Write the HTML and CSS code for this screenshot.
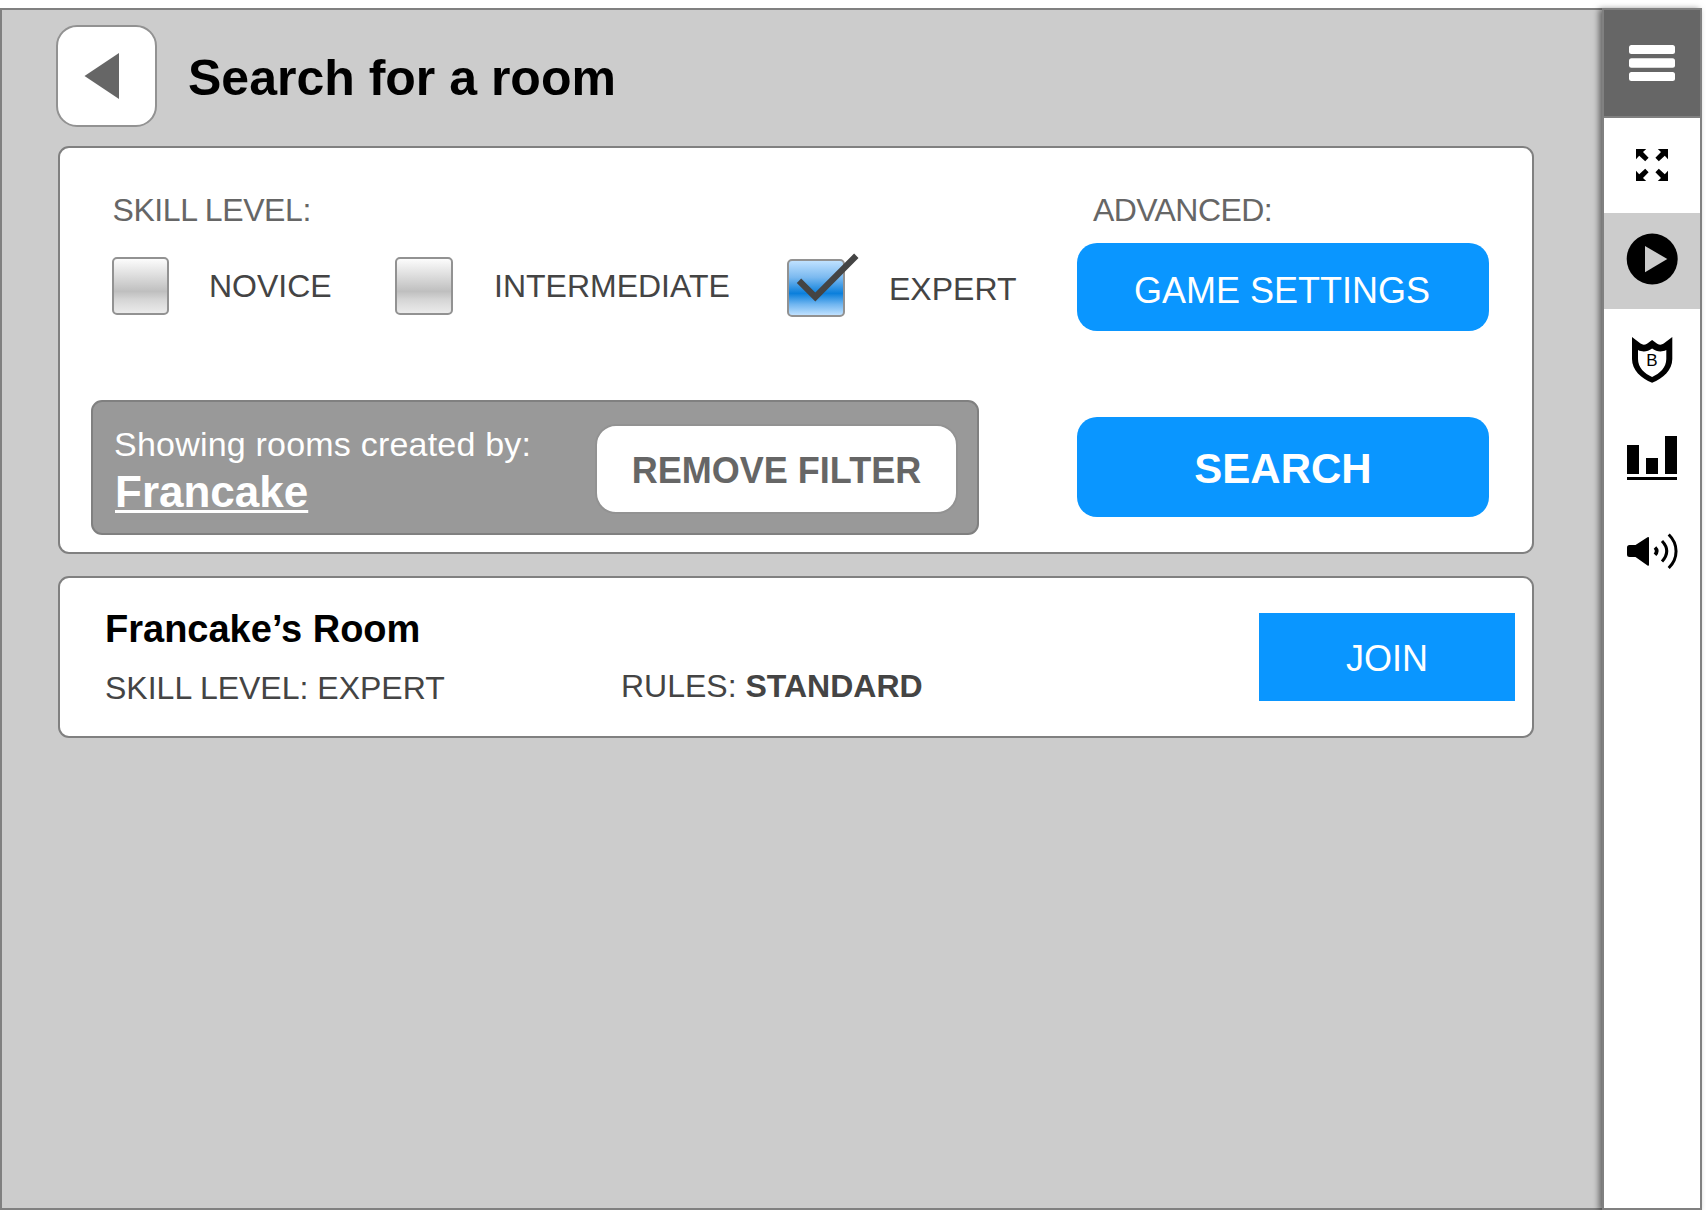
FILE: index.html
```html
<!DOCTYPE html>
<html lang="en">
<head>
<meta charset="utf-8">
<title>Search for a room</title>
<link rel="stylesheet" href="styles.css">
</head>
<body>
<div class="app">
  <main class="content">
    <header class="page-header">
      <button class="back" aria-label="Back">
        <svg width="97" height="98" viewBox="0 0 97 98"><path d="M26.5 49L61 26v46z" fill="#666"/></svg>
      </button>
      <h1 class="page-title">Search for a room</h1>
    </header>

    <section class="panel search-panel">
      <div class="filters">
        <div class="caption caption-skill">SKILL LEVEL:</div>
        <div class="levels">
          <label class="level"><span class="box box-first"></span><span class="level-name">NOVICE</span></label>
          <label class="level level-mid"><span class="box"></span><span class="level-name">INTERMEDIATE</span></label>
          <label class="level level-on"><span class="box box-on"><svg class="tick" width="64" height="50" viewBox="0 0 64 50"><path d="M3 26.7L19.3 43L60.3 1.700" fill="none" stroke="#444" stroke-width="6.200"/></svg></span><span class="level-name">EXPERT</span></label>
        </div>
        <div class="creator">
          <div class="creator-text">
            <div class="creator-label">Showing rooms created by:</div>
            <a class="creator-name">Francake</a>
          </div>
          <button class="remove">REMOVE FILTER</button>
        </div>
      </div>
      <div class="actions">
        <div class="caption caption-advanced">ADVANCED:</div>
        <button class="btn settings">GAME SETTINGS</button>
        <button class="btn search">SEARCH</button>
      </div>
    </section>

    <section class="panel room">
      <div class="room-info">
        <h2 class="room-name">Francake’s Room</h2>
        <div class="room-skill">SKILL LEVEL: EXPERT</div>
      </div>
      <div class="room-rules">RULES: <b>STANDARD</b></div>
      <button class="btn join">JOIN</button>
    </section>
  </main>

  <nav class="sidebar">
    <div class="side-item side-menu">
      <svg width="96" height="106" viewBox="0 0 96 106" fill="#fff"><rect x="25" y="35" width="46" height="9" rx="2.5"/><rect x="25" y="48.3" width="46" height="9.4" rx="2.5"/><rect x="25" y="62" width="46" height="9" rx="2.5"/></svg>
    </div>
    <div class="side-item side-expand">
      <svg width="96" height="95" viewBox="0 0 96 95"><defs><path id="arrow" d="M-16-16H-5.800L-9-13L-3.400-7.200L-6.800-3.800L-12.800-9.200L-16-5.800z"/></defs><g transform="translate(48 47)"><use href="#arrow"/><use href="#arrow" transform="scale(-1 1)"/><use href="#arrow" transform="scale(1 -1)"/><use href="#arrow" transform="scale(-1 -1)"/></g></svg>
    </div>
    <div class="side-item side-play">
      <svg width="96" height="96" viewBox="0 0 96 96"><circle cx="48.2" cy="46" r="25.5"/><path d="M41 33v26.3L63.3 46z" fill="#ccc"/></svg>
    </div>
    <div class="side-item">
      <svg width="96" height="96" viewBox="0 0 96 96"><path fill-rule="evenodd" d="M28 28L36.500 34.600Q39.500 36.600 43 34.800L48.100 31L53.200 34.800Q56.700 36.600 59.700 34.600L68.300 28V50C68.300 61 59 69.500 48.100 73.700C37.200 69.500 28 61 28 50zM34 41V50C34 58.500 40.500 64.500 48.100 68C55.700 64.500 62.300 58.500 62.300 50V41C57 43.500 52.500 42.500 48.100 39.500C43.700 42.500 39.200 43.500 34 41z"/><text class="shield-letter" x="48" y="57" text-anchor="middle">B</text></svg>
    </div>
    <div class="side-item">
      <svg width="96" height="96" viewBox="0 0 96 96"><path d="M23 40h12v29H23zM42 53h12v16H42zM61 31h12v38H61zM23 72h50v3H23z"/></svg>
    </div>
    <div class="side-item">
      <svg width="96" height="96" viewBox="0 0 96 96"><path d="M25.5 44H31.5L43.5 36.3Q45 35.5 45 37V63.5Q45 65.5 43.500 64.500L31.500 56H25.500Q23 56 23 53.500V46.500Q23 44 25.500 44z"/><g fill="none" stroke="#000" stroke-width="3"><path d="M51 46.500Q54.500 50 51 53.800" stroke-width="3.600"/><path d="M58 40Q67.500 50 58 60.500"/><path d="M64.700 33.500C74.500 43 74.500 57.500 64.700 67"/></g></svg>
    </div>
  </nav>
</div>
</body>
</html>
```

FILE: styles.css
```css
* { box-sizing: border-box; }

body {
  margin: 0;
  background: #fff;
  font-family: "Liberation Sans", Arial, sans-serif;
  color: #444;
}

button {
  display: block;
  margin: 0;
  padding: 0;
  border: 0;
  font-family: inherit;
}

svg { display: block; }

.app {
  display: flex;
  width: 1702px;
  height: 1202px;
  margin-top: 8px;
}

.content {
  width: 1602px;
  border: 2px solid #808080;
  border-right: 0;
  background: #ccc;
  padding: 15px 68px 0 56px;
}

.page-header {
  display: flex;
  height: 121px;
  margin-left: -2px;
}

.back {
  width: 101px;
  height: 102px;
  border: 2px solid #929292;
  border-radius: 21px;
  background: #fff;
}

.page-title {
  margin: 25px 0 0 31px;
  font-size: 50px;
  line-height: 56px;
  color: #000;
}

.panel {
  display: flex;
  border: 2px solid #808080;
  border-radius: 11px;
  background: #fff;
}

.search-panel {
  height: 408px;
  padding: 44px 43px 0 31px;
  justify-content: space-between;
}

.filters { width: 960px; }

.caption {
  font-size: 32px;
  line-height: 36px;
  color: #666;
}

.caption-skill { margin-left: 21.5px; letter-spacing: -0.42px; }

.levels {
  display: grid;
  grid-template-columns: 283px 392px auto;
  height: 60px;
  margin: 29px 0 0 21px;
}

.level { display: flex; gap: 40px; }

.level-mid { gap: 41px; }

.level-on { padding-top: 2px; gap: 44px; }

.box {
  width: 58px;
  height: 58px;
  flex: none;
  border: 2px solid #929292;
  border-radius: 5px;
  background: linear-gradient(#fcfcfc 0%, #dedede 30%, #bfbfbf 60%, #d5d5d5 75%, #ebebeb 100%);
}

.box-first { width: 57px; }

.box-on {
  position: relative;
  background: linear-gradient(#bfe1ff 0%, #7cbaf0 30%, #0a7fdc 60%, #6fb5f0 80%, #bfe1ff 100%);
}

.tick {
  position: absolute;
  left: 7px;
  top: -7px;
  overflow: visible;
}

.level-name {
  margin-top: 11px;
  font-size: 32px;
  line-height: 36px;
}

.level-on .level-name { margin-top: 12px; }

.creator {
  display: flex;
  justify-content: space-between;
  width: 888px;
  height: 135px;
  margin-top: 83px;
  padding: 22px 19px 0 21px;
  border: 2px solid #808080;
  border-radius: 11px;
  background: #999;
  color: #fff;
}

.creator-label {
  font-size: 34px;
  line-height: 40px;
  letter-spacing: 0.21px;
}

.creator-name {
  display: block;
  margin: 3px 0 0 1px;
  font-size: 44px;
  font-weight: bold;
  line-height: 50px;
  text-decoration: underline;
  text-decoration-thickness: 3px;
  text-underline-offset: 3px;
  text-decoration-skip-ink: none;
}

.remove {
  width: 363px;
  height: 90px;
  padding-top: 3px;
  border: 2px solid #929292;
  border-radius: 21px;
  background: #fff;
  font-size: 36px;
  font-weight: bold;
  color: #666;
}

.actions { width: 412px; }

.caption-advanced { margin-left: 16px; letter-spacing: -0.6px; }

.btn {
  background: #0a96ff;
  color: #fff;
  font-size: 36px;
}

.settings {
  width: 412px;
  height: 88px;
  margin-top: 15px;
  padding: 7px 2px 0 0;
  border-radius: 20px;
}

.search {
  width: 412px;
  height: 100px;
  margin-top: 86px;
  padding-top: 4px;
  border-radius: 20px;
  font-size: 42px;
  font-weight: bold;
}

.room {
  height: 162px;
  margin-top: 22px;
  padding: 29px 17px 0 45px;
}

.room-info { width: 516px; }

.room-name {
  margin: 0;
  font-size: 38px;
  line-height: 44px;
  color: #000;
}

.room-skill {
  margin-top: 19px;
  font-size: 32px;
  line-height: 36px;
}

.room-rules {
  margin-top: 61px;
  font-size: 32px;
  line-height: 36px;
}

.join {
  width: 256px;
  height: 88px;
  margin: 6px 0 0 auto;
  padding-top: 3px;
}

.sidebar {
  position: relative;
  width: 100px;
  border: 2px solid #808080;
  background: #fff;
  box-shadow: -3px 1px 6px rgba(0, 0, 0, 0.5);
}

.side-item { height: 96px; }

.side-menu {
  height: 108px;
  border-bottom: 2px solid #808080;
  background: #666;
}

.side-expand { height: 95px; }

.side-play { background: #ccc; }

.shield-letter { font-size: 17px; }
```
